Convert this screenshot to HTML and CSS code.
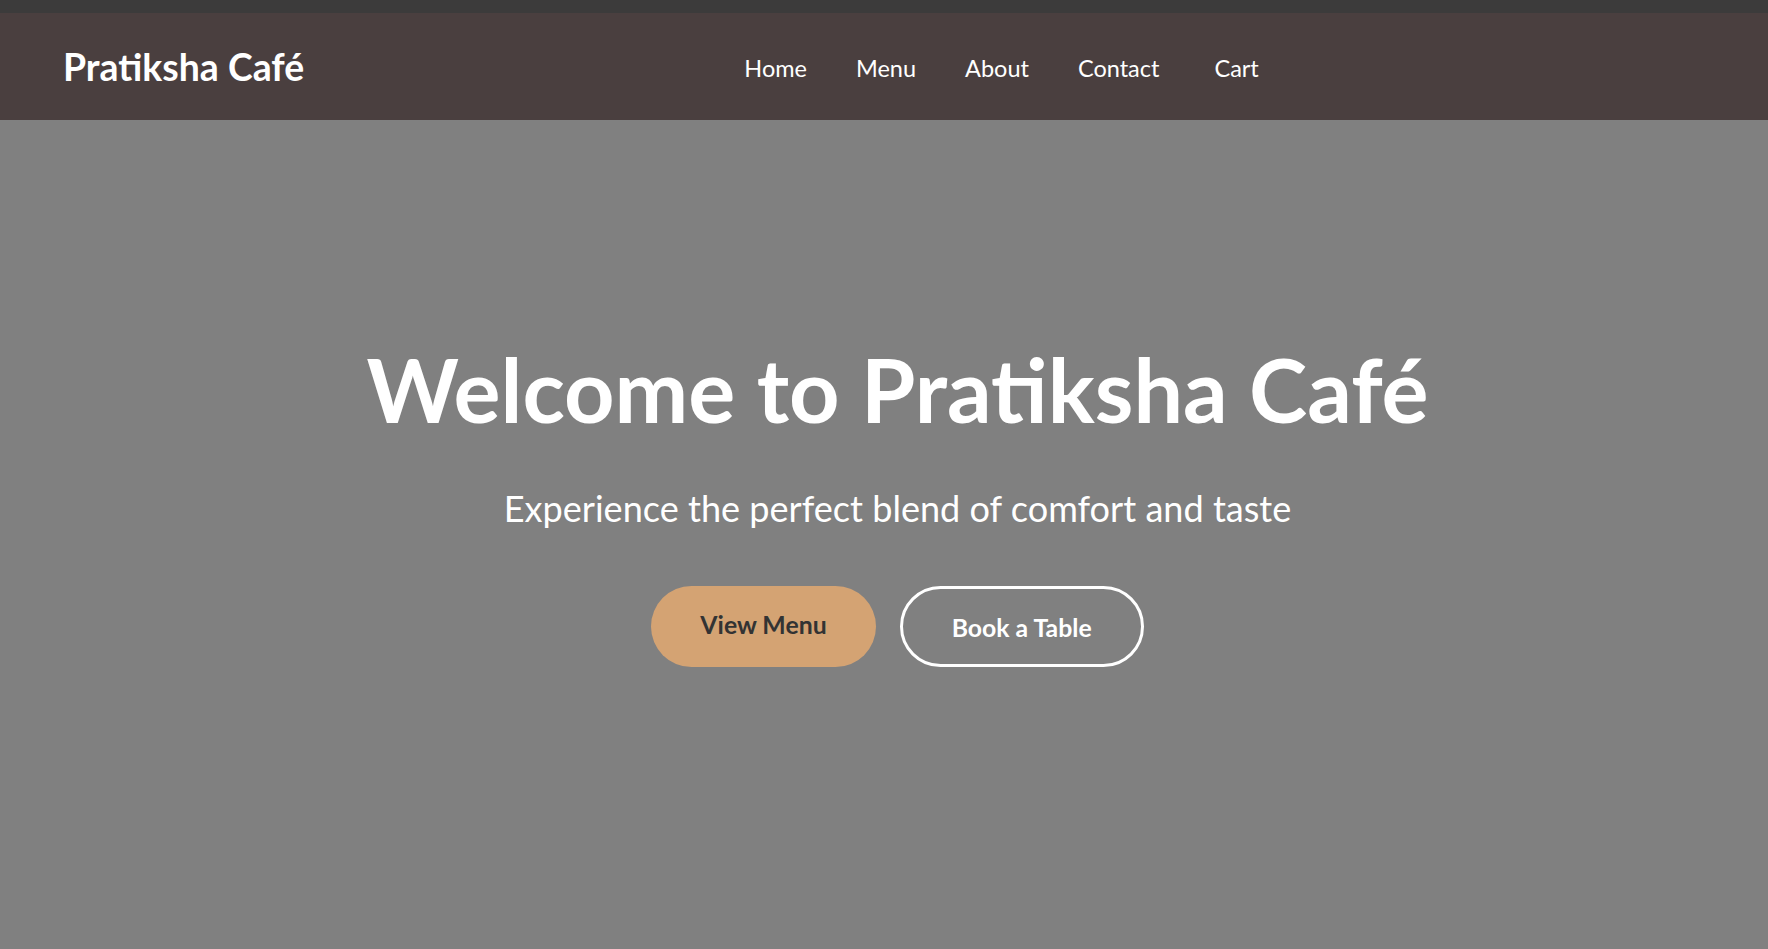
FILE: index.html
```html
<!DOCTYPE html>
<html lang="en">
<head>
<meta charset="utf-8">
<title>Pratiksha Café</title>
<link rel="stylesheet" href="styles.css">
</head>
<body>
<div class="topbar"></div>
<header class="site-header">
  <a class="logo" href="#">Pratiksha Café</a>
  <nav class="nav">
    <a href="#">Home</a>
    <a href="#">Menu</a>
    <a href="#">About</a>
    <a href="#">Contact</a>
    <a href="#" class="cart"><span class="cart-label">Cart</span></a>
  </nav>
  <div class="header-end"></div>
</header>
<main class="hero">
  <h1 class="hero-title">Welcome to Pratiksha Café</h1>
  <p class="hero-sub">Experience the perfect blend of comfort and taste</p>
  <div class="hero-actions">
    <a href="#" class="btn btn-primary">View Menu</a>
    <a href="#" class="btn btn-outline">Book a Table</a>
  </div>
</main>
</body>
</html>
```
FILE: styles.css
```css
* { box-sizing: border-box; }
html, body { margin: 0; padding: 0; }
body {
  font-family: "Lato", "Liberation Sans", sans-serif;
  background: #808080;
  color: #fff;
  min-height: 949px;
  display: flex;
  flex-direction: column;
}
a { text-decoration: none; color: inherit; }

.topbar {
  height: 13px;
  background: #3c3b3b;
}

.site-header {
  height: 107px;
  padding: 3px 63px 0;
  background: #4a3f3f;
  display: flex;
  align-items: center;
  justify-content: space-between;
}
.logo {
  font-size: 37.4px;
  font-weight: 700;
  line-height: 1.2;
  color: #fff;
  margin-bottom: 1px;
}
.nav {
  display: flex;
  gap: 49px;
  font-size: 23.5px;
  line-height: 1.2;
}
.nav a { color: #fff; }
.cart-label { margin-left: 6px; }
.header-end { width: 6px; }

.hero {
  flex: 1;
  background: #808080;
  display: flex;
  flex-direction: column;
  align-items: center;
  padding: 217px 0 0 27px;
  text-align: center;
}
.hero-title {
  margin: 0;
  font-size: 88px;
  font-weight: 700;
  line-height: 1.2;
  color: #fff;
}
.hero-sub {
  margin: 44px 0 0;
  font-size: 36.1px;
  font-weight: 400;
  line-height: 1.2;
  color: #fff;
}
.hero-actions {
  margin-top: 56px;
  display: flex;
  gap: 24px;
}
.btn {
  height: 81px;
  display: inline-flex;
  align-items: center;
  justify-content: center;
  border-radius: 41px;
  font-size: 24.8px;
  font-weight: 700;
  line-height: 1.2;
  padding: 0 49px;
}
.btn-primary {
  background: #d4a373;
  color: #333;
  padding-bottom: 4px;
}
.btn-outline {
  border: 3px solid #fff;
  color: #fff;
  padding-top: 2px;
}
```
